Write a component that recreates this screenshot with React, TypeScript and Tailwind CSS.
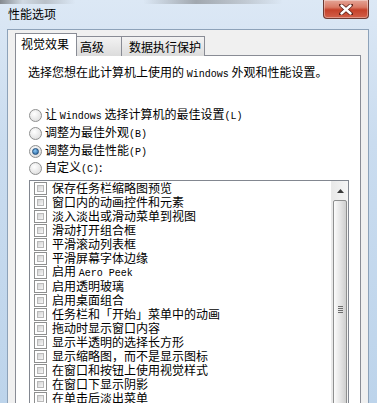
import React from "react";

const Mono: React.FC<{ children: React.ReactNode }> = ({ children }) => (
  <span className="font-['Liberation_Mono',monospace] text-[10px]">{children}</span>
);

const items: React.ReactNode[] = [
  "保存任务栏缩略图预览",
  "窗口内的动画控件和元素",
  "淡入淡出或滑动菜单到视图",
  "滑动打开组合框",
  "平滑滚动列表框",
  "平滑屏幕字体边缘",
  <>
    启用 <Mono>Aero Peek</Mono>
  </>,
  "启用透明玻璃",
  "启用桌面组合",
  "任务栏和「开始」菜单中的动画",
  "拖动时显示窗口内容",
  "显示半透明的选择长方形",
  "显示缩略图，而不是显示图标",
  "在窗口和按钮上使用视觉样式",
  "在窗口下显示阴影",
  "在单击后淡出菜单",
];

const Radio: React.FC<{ checked?: boolean }> = ({ checked }) => (
  <div className="w-[13px] h-[13px] rounded-full border border-[#8e8f8f] bg-[radial-gradient(circle_at_40%_35%,#ffffff,#d6d6d6)] flex items-center justify-center shrink-0">
    {checked && (
      <div className="w-[7px] h-[7px] rounded-full bg-[radial-gradient(circle_at_40%_35%,#8cc8f5,#1d5b98)] border border-[#24507c]" />
    )}
  </div>
);

const Checkbox: React.FC = () => (
  <div className="w-[13px] h-[13px] border border-[#8e8f8f] bg-white p-[2px] shrink-0">
    <div className="w-full h-full border border-[#b9b9b9] bg-gradient-to-br from-[#d2d2d2] to-[#f7f7f7]" />
  </div>
);

export default function App() {
  return (
    <div className="w-[377px] h-[403px] overflow-hidden flex flex-col font-['Noto_Sans_CJK_SC',sans-serif] text-black bg-[linear-gradient(180deg,#dce8f5_0%,#cadcef_35%,#bdd4eb_100%)]">
      {/* title bar */}
      <div className="h-[29px] flex shrink-0 pl-[8px] pr-[8px] bg-[linear-gradient(90deg,rgba(60,60,60,0.55)_0%,rgba(170,170,170,0.25)_6%,rgba(120,120,120,0.35)_12%,transparent_20%,transparent_38%,rgba(90,90,90,0.45)_52%,rgba(130,130,130,0.3)_65%,transparent_75%)] bg-[length:100%_4px] bg-no-repeat">
        <div className="pt-[7px] text-[12px] leading-[14px]">性能选项</div>
        <div className="ml-auto w-[46px] h-[19px] rounded-b-[4px] border border-t-0 border-[#6b3a33] bg-[linear-gradient(180deg,#e4a597_0%,#d97a66_40%,#c5412a_55%,#d2604a_100%)] shadow-[inset_0_0_0_1px_rgba(255,255,255,0.35)] flex items-center justify-center">
          <svg width="14" height="11" viewBox="0 0 14 11">
            <path d="M2 1 L12 10 M12 1 L2 10" stroke="#5a1f16" strokeWidth="4" strokeLinecap="round" />
            <path d="M2.5 1.5 L11.5 9.5 M11.5 1.5 L2.5 9.5" stroke="#ffffff" strokeWidth="2.4" strokeLinecap="round" />
          </svg>
        </div>
      </div>

      {/* client area */}
      <div className="flex-1 min-h-0 ml-[7px] mr-[8px] bg-[#f0f0f0] border-t border-x border-[#8da2b9] pt-[4px] px-[7px] flex flex-col">
        {/* tabs */}
        <div className="flex items-end h-[22px] relative z-10 text-[12px] leading-[14px]">
          <div className="w-[62px] h-[23px] bg-white border border-b-0 border-[#898c95] pl-[5px] pt-[3px]">视觉效果</div>
          <div className="w-[46px] h-[20px] -ml-px border border-b-0 border-[#898c95] bg-gradient-to-b from-[#f3f3f3] to-[#dcdcdc] pl-[3px] pt-[3px]">高级</div>
          <div className="w-[84px] h-[20px] -ml-px border border-b-0 border-[#898c95] bg-gradient-to-b from-[#f3f3f3] to-[#dcdcdc] pl-[7px] pt-[3px]">数据执行保护</div>
        </div>

        {/* tab page */}
        <div className="flex-1 min-h-0 -mt-px bg-white border border-b-0 border-[#898c95] pt-[9px] pl-[12px] pr-[12px] flex flex-col text-[12px] leading-[14px]">
          <div>
            选择您想在此计算机上使用的 <Mono>Windows</Mono> 外观和性能设置。
          </div>

          <div className="mt-[24px] flex flex-col">
            <div className="h-[18px] flex items-center gap-[3px] pl-[1px]">
              <Radio />
              <span>
                让 <Mono>Windows</Mono> 选择计算机的最佳设置<Mono>(L)</Mono>
              </span>
            </div>
            <div className="h-[18px] flex items-center gap-[3px] pl-[1px]">
              <Radio />
              <span>
                调整为最佳外观<Mono>(B)</Mono>
              </span>
            </div>
            <div className="h-[18px] flex items-center gap-[3px] pl-[1px]">
              <Radio checked />
              <span>
                调整为最佳性能<Mono>(P)</Mono>
              </span>
            </div>
            <div className="h-[17px] flex items-center gap-[3px] pl-[1px]">
              <Radio />
              <span>
                自定义<Mono>(C)</Mono>:
              </span>
            </div>
          </div>

          {/* list box */}
          <div className="mt-[3px] ml-[1px] w-[320px] flex-1 min-h-0 border border-b-0 border-[#828790] flex overflow-hidden">
            <div className="flex-1 flex flex-col pl-[4px]">
              {items.map((it, i) => (
                <div key={i} className="h-[14px] flex items-center gap-[5px] whitespace-nowrap">
                  <Checkbox />
                  <span>{it}</span>
                </div>
              ))}
            </div>
            <div className="w-[17px] flex flex-col bg-gradient-to-r from-[#e9e9e9] to-[#f5f5f5] border-l border-[#eaeaea]">
              <div className="h-[19px] flex items-center justify-center shrink-0">
                <svg width="7" height="4" viewBox="0 0 7 4">
                  <path d="M3.5 0 L7 4 L0 4 Z" fill="#3a3a3a" />
                </svg>
              </div>
              <div className="h-[218px] shrink-0 mx-[1px] rounded-[2px] border border-[#8e8f8f] bg-gradient-to-r from-[#fbfbfb] via-[#e6e6e6] to-[#cfcfcf] flex items-center justify-center">
                <div className="flex flex-col gap-[1px]">
                  <div className="w-[5px] h-px bg-[#6d6d6d]" />
                  <div className="w-[5px] h-px bg-[#6d6d6d]" />
                  <div className="w-[5px] h-px bg-[#6d6d6d]" />
                  <div className="w-[5px] h-px bg-[#6d6d6d]" />
                </div>
              </div>
            </div>
          </div>
        </div>
      </div>
    </div>
  );
}
